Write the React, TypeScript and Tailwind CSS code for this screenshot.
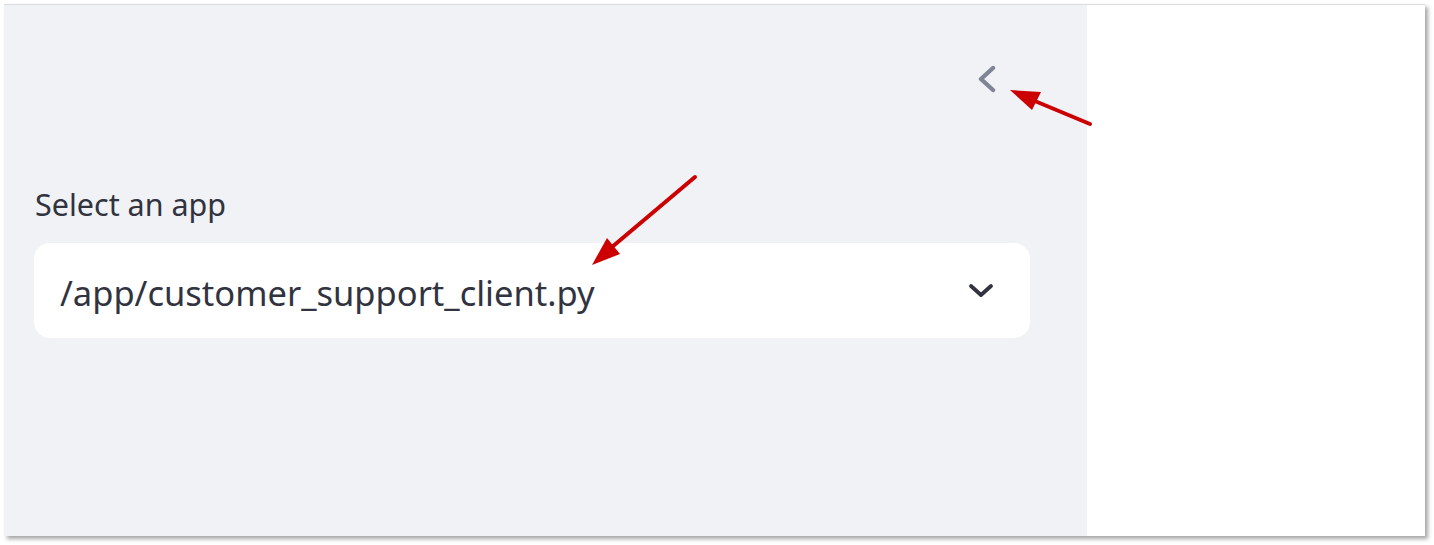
import React from "react";

function RedArrows() {
  return (
    <svg
      className="absolute inset-0 pointer-events-none"
      width="1434"
      height="545"
      viewBox="0 0 1434 545"
    >
      <line x1="1090" y1="124" x2="1030" y2="99" stroke="#cc0000" strokeWidth="4" strokeLinecap="round" />
      <polygon points="1010,90 1041,92 1032,110" fill="#cc0000" />
      <line x1="695" y1="177" x2="612" y2="247" stroke="#cc0000" strokeWidth="4" strokeLinecap="round" />
      <polygon points="592,265 607,238 620,254" fill="#cc0000" />
    </svg>
  );
}

export default function App() {
  return (
    <div className="relative w-full h-[545px] bg-white pt-1 pl-1 font-['Noto_Sans',sans-serif]">
      <div className="flex w-[1421px] h-[532px] border-t border-[#dcdcdc] shadow-[3px_3px_4px_rgba(0,0,0,0.35)]">
        <aside className="w-[1083px] bg-[#f0f2f6] pl-[30px] pr-[57px]">
          <div className="flex justify-end pt-[59px] pr-[30px]">
            <svg width="22" height="30" viewBox="0 0 22 30">
              <polyline
                points="15,4 3,15 15,26"
                fill="none"
                stroke="#808495"
                strokeWidth="4.4"
                strokeLinecap="round"
                strokeLinejoin="round"
              />
            </svg>
          </div>
          <label className="block mt-[91px] text-[30.5px] leading-[38px] text-[#31333f] pl-[1px]">
            Select an app
          </label>
          <div className="mt-[20px] h-[95px] bg-white rounded-[16px] flex items-center justify-between pl-[26px] pr-[36px]">
            <span className="text-[34.5px] text-[#31333f] leading-none pt-[5px]">
              /app/customer_support_client.py
            </span>
            <svg width="26" height="16" viewBox="0 0 26 16">
              <polyline
                points="3,3 13,12 23,3"
                fill="none"
                stroke="#31333f"
                strokeWidth="3.8"
                strokeLinecap="round"
                strokeLinejoin="round"
              />
            </svg>
          </div>
        </aside>
        <main className="flex-1 bg-white" />
      </div>
      <RedArrows />
    </div>
  );
}
